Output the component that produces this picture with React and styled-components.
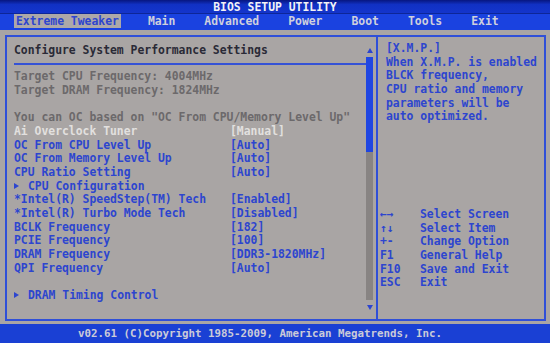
import React from "react";
import styled, { createGlobalStyle } from "styled-components";

const GlobalStyle = createGlobalStyle`
  html, body {
    margin: 0;
    padding: 0;
    background: #000;
  }
`;

const tabs = ["Extreme Tweaker", "Main", "Advanced", "Power", "Boot", "Tools", "Exit"];

const settings = [
  { label: "Target CPU Frequency: 4004MHz", tone: "gray" },
  { label: "Target DRAM Frequency: 1824MHz", tone: "gray" },
  { blank: true },
  { label: 'You can OC based on "OC From CPU/Memory Level Up"', tone: "gray" },
  { label: "Ai Overclock Tuner", value: "[Manual]", tone: "light" },
  { label: "OC From CPU Level Up", value: "[Auto]" },
  { label: "OC From Memory Level Up", value: "[Auto]" },
  { label: "CPU Ratio Setting", value: "[Auto]" },
  { label: "CPU Configuration", sub: true },
  { label: "*Intel(R) SpeedStep(TM) Tech", value: "[Enabled]" },
  { label: "*Intel(R) Turbo Mode Tech", value: "[Disabled]" },
  { label: "BCLK Frequency", value: "[182]" },
  { label: "PCIE Frequency", value: "[100]" },
  { label: "DRAM Frequency", value: "[DDR3-1820MHz]" },
  { label: "QPI Frequency", value: "[Auto]" },
  { blank: true },
  { label: "DRAM Timing Control", sub: true },
];

const help = [
  "[X.M.P.]",
  "When X.M.P. is enabled",
  "BLCK frequency,",
  "CPU ratio and memory",
  "parameters will be",
  "auto optimized.",
];

const keys = [
  ["←→", "Select Screen"],
  ["↑↓", "Select Item"],
  ["+-", "Change Option"],
  ["F1", "General Help"],
  ["F10", "Save and Exit"],
  ["ESC", "Exit"],
];

const toneColor = {
  gray: "#6c696b",
  light: "#e2e0df",
  blue: "#2d45cf",
};

const App = () => {
  return (
    <Screen>
      <GlobalStyle />
      <TitleBar>BIOS SETUP UTILITY</TitleBar>
      <MenuBar>
        {tabs.map((t, i) => (
          <Tab key={t} active={i === 0}>
            {t}
          </Tab>
        ))}
      </MenuBar>

      <Body>
        <Frame>
          <LeftPanel>
            <Content>
              <Header>Configure System Performance Settings</Header>
              <Rule />
              <List>
                {settings.map((s, i) =>
                  s.blank ? (
                    <Row key={i} />
                  ) : (
                    <Row key={i} tone={s.tone || "blue"}>
                      <span>
                        {s.sub && <Arrow />}
                        {s.label}
                      </span>
                      <span>{s.value}</span>
                    </Row>
                  )
                )}
              </List>
            </Content>
            <ScrollBar>
              <UpArrow />
              <Thumb />
              <Track />
              <DownArrow />
            </ScrollBar>
          </LeftPanel>

          <RightPanel>
            <Help>
              {help.map((h) => (
                <Line key={h}>{h}</Line>
              ))}
            </Help>
            <Legend>
              {keys.map(([k, d]) => (
                <React.Fragment key={k}>
                  <Line>{k}</Line>
                  <Line>{d}</Line>
                </React.Fragment>
              ))}
            </Legend>
          </RightPanel>
        </Frame>
      </Body>

      <Footer>v02.61 (C)Copyright 1985-2009, American Megatrends, Inc.</Footer>
    </Screen>
  );
};

export default App;

const mono = `"DejaVu Sans Mono", "Liberation Mono", monospace`;

const Screen = styled.div`
  width: 550px;
  height: 343px;
  display: flex;
  flex-direction: column;
  background: #a9a5a4;
  font-family: ${mono};
  font-size: 11.4px;
  font-weight: 700;
  overflow: hidden;
`;

const TitleBar = styled.div`
  height: 14px;
  line-height: 14px;
  text-align: center;
  color: #f2f2f6;
  background: linear-gradient(#071680 0%, #1131c4 35%, #1435cc 100%);
  border-bottom: 1px solid #0d2698;
  box-sizing: border-box;
`;

const MenuBar = styled.div`
  height: 16px;
  display: flex;
  align-items: flex-start;
  gap: 25px;
  padding-left: 14px;
  background: #1a42e0;
`;

const Tab = styled.div`
  height: 14px;
  line-height: 14px;
  padding: 0 2px;
  color: ${({ active }) => (active ? "#2d45cf" : "#cfd0dd")};
  background: ${({ active }) => (active ? "#aca8a8" : "transparent")};
  white-space: pre;
`;

const Body = styled.div`
  flex: 1;
  display: flex;
  padding: 5px 4px 3px 5px;
`;

const Frame = styled.div`
  flex: 1;
  display: flex;
  border: 2px solid #2f4fd8;
`;

const LeftPanel = styled.div`
  width: 369px;
  display: flex;
`;

const Content = styled.div`
  flex: 1;
  padding-left: 7px;
`;

const Header = styled.div`
  padding-top: 7px;
  height: 13.65px;
  line-height: 13.65px;
  color: #2a2a36;
  white-space: pre;
`;

const Rule = styled.div`
  margin-top: 5px;
  height: 2px;
  background: #3552d6;
`;

const List = styled.div`
  margin-top: 5.5px;
`;

const Row = styled.div`
  display: grid;
  grid-template-columns: 216px auto;
  height: 13.7px;
  line-height: 13.7px;
  white-space: pre;
  color: ${({ tone }) => toneColor[tone] || toneColor.blue};
`;

const Arrow = styled.span`
  display: inline-block;
  width: 0;
  height: 0;
  border-left: 5px solid #2d45cf;
  border-top: 3px solid transparent;
  border-bottom: 3px solid transparent;
  margin: 0 9px 1px 0;
`;

const ScrollBar = styled.div`
  width: 7px;
  margin-right: 3px;
  display: flex;
  flex-direction: column;
  align-items: center;
`;

const UpArrow = styled.div`
  margin-top: 11px;
  width: 0;
  height: 0;
  border-bottom: 5px solid #2d45cf;
  border-left: 3.5px solid transparent;
  border-right: 3.5px solid transparent;
`;

const Thumb = styled.div`
  margin-top: 4px;
  width: 7px;
  height: 95px;
  background: #1f46e2;
`;

const Track = styled.div`
  width: 7px;
  height: 148px;
  background: #888483;
`;

const DownArrow = styled.div`
  margin-top: 5px;
  width: 0;
  height: 0;
  border-top: 5px solid #2d45cf;
  border-left: 3.5px solid transparent;
  border-right: 3.5px solid transparent;
`;

const RightPanel = styled.div`
  flex: 1;
  display: flex;
  flex-direction: column;
  justify-content: space-between;
  border-left: 2px solid #2f4fd8;
  padding: 5px 0 29px 2px;
  color: #2d45cf;
`;

const Help = styled.div`
  padding-left: 6px;
`;

const Line = styled.div`
  height: 13.65px;
  line-height: 13.65px;
  white-space: pre;
`;

const Legend = styled.div`
  display: grid;
  grid-template-columns: 40px auto;
`;

const Footer = styled.div`
  height: 19px;
  line-height: 19px;
  padding-right: 30px;
  text-align: center;
  font-size: 10.8px;
  color: #cbcbd8;
  background: #1a40d4;
  white-space: pre;
`;
